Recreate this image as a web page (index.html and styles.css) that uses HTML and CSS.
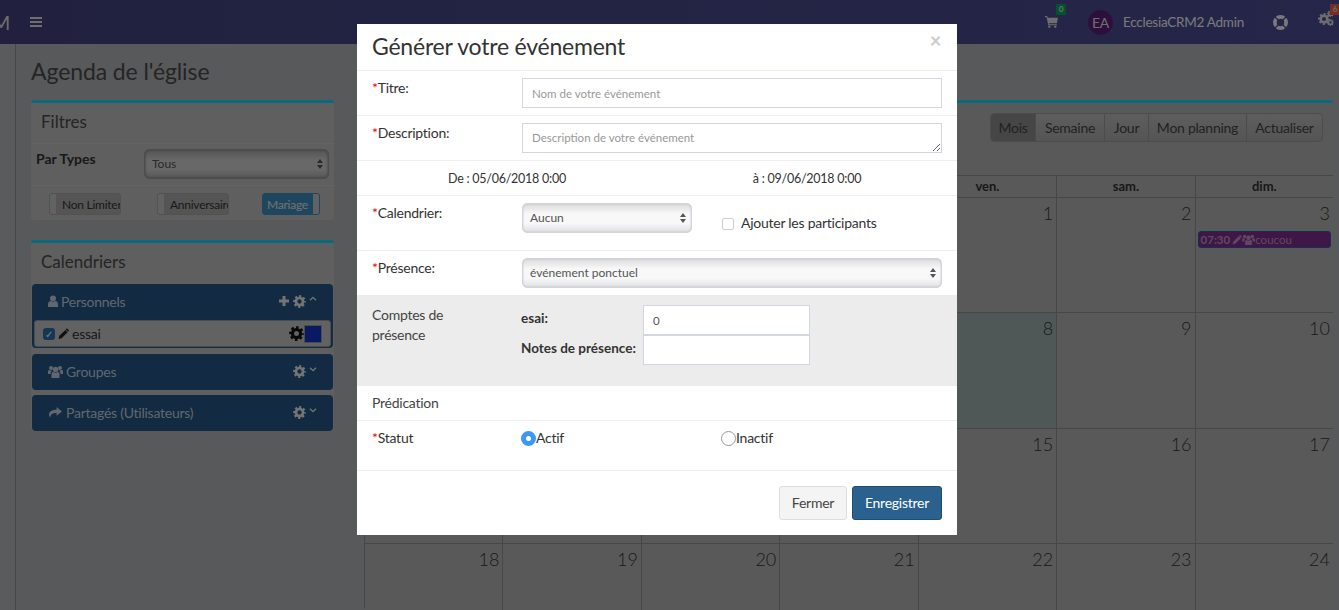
FILE: index.html
```html
<!DOCTYPE html>
<html>
<head>
    <title>Agenda de l'église</title>
    <link rel="stylesheet" href="styles.css">
</head>
<body>
    <svg class="defs" width="0" height="0">
        <symbol id="i-cog" viewBox="0 0 24 24">
            <circle cx="12" cy="12" r="6.5" fill="none" stroke="currentColor" stroke-width="5"/>
            <circle cx="12" cy="12" r="9.8" fill="none" stroke="currentColor" stroke-width="4" stroke-dasharray="4.1 3.6" stroke-dashoffset="2"/>
        </symbol>
        <symbol id="i-plus" viewBox="0 0 24 24">
            <path d="M9 2h6v7h7v6h-7v7H9v-7H2V9h7z" fill="currentColor"/>
        </symbol>
        <symbol id="i-up" viewBox="0 0 24 24">
            <path d="M3 16l9-9 9 9" fill="none" stroke="currentColor" stroke-width="4"/>
        </symbol>
        <symbol id="i-down" viewBox="0 0 24 24">
            <path d="M3 8l9 9 9-9" fill="none" stroke="currentColor" stroke-width="4"/>
        </symbol>
        <symbol id="i-user" viewBox="2 0 20 24">
            <circle cx="12" cy="7" r="6" fill="currentColor"/>
            <path d="M2 24v-5c0-5 3-7 5-7 1.500 1 3 1.500 5 1.500s3.500-.5 5-1.500c2 0 5 2 5 7v5z" fill="currentColor"/>
        </symbol>
        <symbol id="i-users" viewBox="0 0 30 26">
            <circle cx="15" cy="9" r="5.500" fill="currentColor"/>
            <circle cx="6" cy="6" r="4" fill="currentColor"/>
            <circle cx="24" cy="6" r="4" fill="currentColor"/>
            <path d="M7 26v-8c0-3 2-4 4-4 1 1 2.500 1.500 4 1.500s3-.5 4-1.500c2 0 4 1 4 4v8z" fill="currentColor"/>
            <path d="M0 18v-5c0-2 1-3 3-3 1 1 2 1 3 1l2 .5c-2 1-3 3-3 6.500H0zM30 18v-5c0-2-1-3-3-3-1 1-2 1-3 1l-2 .5c2 1 3 3 3 6.500h5z" fill="currentColor"/>
        </symbol>
        <symbol id="i-share" viewBox="0 0 24 24">
            <path d="M14 2l10 8-10 8v-5c-6 0-10 1-12 8-1-1-2-3-2-5 0-6 6-9 14-9z" fill="currentColor"/>
        </symbol>
        <symbol id="i-pencil" viewBox="0 0 24 24">
            <path d="M1 23l2-7L16 3l5 5L8 21zM18 1c1-1 2-1 3 0l2 2c1 1 1 2 0 3l-1 1-5-5z" fill="currentColor"/>
        </symbol>
        <symbol id="i-cart" viewBox="0 0 24 24">
            <path d="M0 2h4l1 3h19l-2 10H7l.5 2H22v2H6L3 4H0z" fill="currentColor"/>
            <circle cx="8" cy="21.500" r="2.200" fill="currentColor"/>
            <circle cx="19" cy="21.500" r="2.200" fill="currentColor"/>
        </symbol>
        <symbol id="i-ring" viewBox="0 0 24 24">
            <circle cx="12" cy="12" r="9" fill="none" stroke="currentColor" stroke-width="6"/>
            <path d="M2.500 2.500l6 6M21.500 2.500l-6 6M2.500 21.500l6-6M21.500 21.500l-6-6" stroke="#4c4c94" stroke-width="2"/>
        </symbol>
    </svg>

    <header class="navbar">
        <span class="logo">M</span>
        <span class="bars"><i></i><i></i><i></i></span>
        <div class="nav-right">
            <span class="nav-cart">
                <svg class="ico-cart"><use href="#i-cart"/></svg>
                <b class="badge green">0</b>
            </span>
            <span class="avatar">EA</span>
            <span class="nav-user">EcclesiaCRM2 Admin</span>
            <svg class="ico-ring"><use href="#i-ring"/></svg>
            <span class="nav-cogs">
                <svg class="cog-big"><use href="#i-cog"/></svg>
                <svg class="cog-small"><use href="#i-cog"/></svg>
                <svg class="cog-small top"><use href="#i-cog"/></svg>
                <b class="badge red">6</b>
            </span>
        </div>
    </header>

    <div class="page">
        <aside class="sidebar"></aside>
        <main class="content">
            <h1>Agenda de l'église</h1>
            <div class="columns">
                <div class="left-col">
                    <section class="box">
                        <h3 class="box-title">Filtres</h3>
                        <div class="filter-type">
                            <b>Par Types</b>
                            <div class="select-wrap filter-select"><select><option>Tous</option></select></div>
                        </div>
                        <div class="toggles">
                            <span class="toggle"><i></i><em>Non Limiter</em></span>
                            <span class="toggle"><i></i><em>Anniversaire</em></span>
                            <span class="toggle on"><em>Mariage</em><i></i></span>
                        </div>
                    </section>
                    <section class="box cal-box">
                        <h3 class="box-title">Calendriers</h3>
                        <div class="panel first">
                            <div class="panel-head">
                                <svg class="ico-user"><use href="#i-user"/></svg>
                                <span>Personnels</span>
                                <div class="panel-tools">
                                    <svg class="ico-plus"><use href="#i-plus"/></svg>
                                    <svg class="ico-cog"><use href="#i-cog"/></svg>
                                    <svg class="ico-caret up"><use href="#i-up"/></svg>
                                </div>
                            </div>
                            <div class="panel-item">
                                <span class="check-on">&#10003;</span>
                                <svg class="ico-pencil"><use href="#i-pencil"/></svg>
                                <span class="item-name">essai</span>
                                <svg class="ico-cog dark"><use href="#i-cog"/></svg>
                                <span class="swatch"></span>
                            </div>
                        </div>
                        <div class="panel">
                            <div class="panel-head">
                                <svg class="ico-users"><use href="#i-users"/></svg>
                                <span>Groupes</span>
                                <div class="panel-tools">
                                    <svg class="ico-cog"><use href="#i-cog"/></svg>
                                    <svg class="ico-caret"><use href="#i-down"/></svg>
                                </div>
                            </div>
                        </div>
                        <div class="panel">
                            <div class="panel-head">
                                <svg class="ico-users"><use href="#i-share"/></svg>
                                <span>Partagés (Utilisateurs)</span>
                                <div class="panel-tools">
                                    <svg class="ico-cog"><use href="#i-cog"/></svg>
                                    <svg class="ico-caret"><use href="#i-down"/></svg>
                                </div>
                            </div>
                        </div>
                    </section>
                </div>

                <section class="box calendar">
                    <div class="cal-toolbar">
                        <div class="btn-group">
                            <span class="active w-mois">Mois</span>
                            <span class="w-semaine">Semaine</span>
                            <span class="w-jour">Jour</span>
                            <span class="w-planning">Mon planning</span>
                            <span class="w-actu">Actualiser</span>
                        </div>
                    </div>
                    <div class="cal-grid">
                        <div class="dow">lun.</div><div class="dow">mar.</div><div class="dow">mer.</div><div class="dow">jeu.</div><div class="dow">ven.</div><div class="dow">sam.</div><div class="dow">dim.</div>
                        <div class="day other">28</div><div class="day other">29</div><div class="day other">30</div><div class="day other">31</div><div class="day">1</div><div class="day">2</div>
                        <div class="day">3<span class="event"><b>07:30</b><svg class="ico-ev-pencil"><use href="#i-pencil"/></svg><svg class="ico-ev-users"><use href="#i-users"/></svg>coucou</span></div>
                        <div class="day">4</div><div class="day">5</div><div class="day">6</div><div class="day">7</div><div class="day today">8</div><div class="day">9</div><div class="day">10</div>
                        <div class="day">11</div><div class="day">12</div><div class="day">13</div><div class="day">14</div><div class="day">15</div><div class="day">16</div><div class="day">17</div>
                        <div class="day">18</div><div class="day">19</div><div class="day">20</div><div class="day">21</div><div class="day">22</div><div class="day">23</div><div class="day">24</div>
                    </div>
                </section>
            </div>
        </main>
    </div>

    <div class="backdrop"></div>

    <div class="modal">
        <div class="modal-head">
            <h2>Générer votre événement</h2>
            <span class="close">&times;</span>
        </div>
        <div class="row row-title">
            <label><i>*</i>Titre:</label>
            <input type="text" placeholder="Nom de votre événement">
        </div>
        <div class="row row-desc">
            <label><i>*</i>Description:</label>
            <textarea placeholder="Description de votre événement"></textarea>
        </div>
        <div class="row-dates">
            <span>De : 05/06/2018 0:00</span>
            <span>à : 09/06/2018 0:00</span>
        </div>
        <div class="row row-cal">
            <label><i>*</i>Calendrier:</label>
            <div class="select-wrap cal-select"><select><option>Aucun</option></select></div>
            <span class="check-off"></span>
            <span class="attend">Ajouter les participants</span>
        </div>
        <div class="row row-pres">
            <label><i>*</i>Présence:</label>
            <div class="select-wrap pres-select"><select><option>événement ponctuel</option></select></div>
        </div>
        <div class="row-counts">
            <span class="counts-label">Comptes de présence</span>
            <div class="counts">
                <b>esai:</b><input type="text" value="0">
                <b>Notes de présence:</b><input type="text">
            </div>
        </div>
        <div class="row-pred">Prédication</div>
        <div class="row row-status">
            <label><i>*</i>Statut</label>
            <span class="radio-col"><span class="radio on"></span>Actif</span>
            <span class="radio-col"><span class="radio"></span>Inactif</span>
        </div>
        <div class="modal-foot">
            <button class="btn-close">Fermer</button>
            <button class="btn-save">Enregistrer</button>
        </div>
    </div>
</body>
</html>
```

FILE: styles.css
```css
* {
    box-sizing: border-box;
}
html, body {
    margin: 0;
    height: 610px;
    overflow: hidden;
}
body {
    font-family: "Lato", "Noto Sans", sans-serif;
    font-size: 14px;
    letter-spacing: -0.25px;
    color: #444;
    background: #b0b3b6;
}
.defs {
    display: block;
    height: 0;
}

/* top bar */
.navbar {
    height: 44px;
    background: linear-gradient(to right, #42427e, #4c4c94);
    display: flex;
    align-items: center;
    color: #fff;
}
.logo {
    width: 10px;
    overflow: hidden;
    direction: rtl;
    font-size: 20px;
    color: #ddd;
}
.bars {
    display: flex;
    flex-direction: column;
    gap: 2px;
    width: 12px;
    margin-left: 20px;
}
.bars i {
    height: 2px;
    background: #ddd;
}
.nav-right {
    margin-left: auto;
    display: flex;
    align-items: center;
}
.nav-cart, .nav-cogs {
    position: relative;
    display: block;
    height: 14px;
}
.nav-cart {
    width: 13px;
}
.ico-cart {
    display: block;
    width: 13px;
    height: 13px;
    color: #ddd;
}
.badge {
    position: absolute;
    top: -11px;
    left: 11px;
    width: 10px;
    height: 11px;
    font-size: 8px;
    line-height: 11px;
    text-align: center;
    color: #ddd;
}
.badge.green {
    background: #00a65a;
}
.badge.red {
    background: #f05a3c;
    top: -10px;
    left: 12px;
}
.avatar {
    width: 25px;
    height: 25px;
    margin-left: 30px;
    border-radius: 50%;
    background: #5a1f7c;
    color: #ddd;
    font-size: 14px;
    line-height: 25px;
    text-align: center;
}
.nav-user {
    margin-left: 10px;
    font-size: 13.500px;
    color: #f2f2f6;
}
.ico-ring {
    width: 15px;
    height: 15px;
    margin-left: 29px;
    color: #f2f2f6;
}
.nav-cogs {
    width: 21px;
    margin: 0 0 0 30px;
    height: 16px;
    color: #ddd;
}
.cog-big {
    position: absolute;
    left: 0;
    top: -1px;
    width: 12px;
    height: 12px;
}
.cog-small {
    position: absolute;
    left: 9px;
    top: 5px;
    width: 7px;
    height: 7px;
}
.cog-small.top {
    top: -4px;
}

/* page */
.page {
    display: flex;
    height: 566px;
}
.sidebar {
    width: 16px;
    flex: none;
    background: #b4b6b8;
    border-right: 1px solid #8c8f92;
}
.content {
    flex: 1;
    padding: 13px 6px 0 15px;
    min-width: 0;
}
h1 {
    margin: 0 0 15px;
    font-size: 23px;
    line-height: 28px;
    font-weight: 400;
    letter-spacing: -0.1px;
    color: #4a4a4a;
}
.columns {
    display: grid;
    grid-template-columns: 303px 969px;
    gap: 30px;
}
.box {
    background: #bebebe;
    border-top: 3px solid #14d4fa;
    border-radius: 3px;
    margin-bottom: 20px;
}
.box-title {
    margin: 0;
    padding: 0 10px 2px;
    font-size: 17px;
    font-weight: 400;
    line-height: 38px;
    letter-spacing: 0;
    color: #4a4a4a;
}
.filter-type {
    display: flex;
    padding: 5px 5px 6px;
    height: 43px;
    border-top: 1px solid #c8c8c8;
    border-bottom: 1px solid #c8c8c8;
}
.filter-type b {
    width: 108px;
    line-height: 20px;
    letter-spacing: 0;
    color: #333;
}
.select-wrap {
    position: relative;
    height: 30px;
    border: 1px solid #d0d4de;
    border-radius: 5px;
    background: linear-gradient(to bottom, #dcdcdc, #f8f8f8 35%, #f8f8f8 70%, #e0e0e0);
    box-shadow: inset 0 0 2px #bbb;
}
.select-wrap::before, .select-wrap::after {
    content: "";
    position: absolute;
    right: 5px;
    border-left: 3px solid transparent;
    border-right: 3px solid transparent;
}
.select-wrap::before {
    top: 9px;
    border-bottom: 4px solid #555;
}
.select-wrap::after {
    top: 15px;
    border-top: 4px solid #555;
}
.select-wrap select {
    width: 100%;
    height: 100%;
    border: 0;
    padding: 0 7px 2px;
    background: transparent;
    appearance: none;
    font-family: inherit;
    font-size: 12px;
    color: #555;
}
.filter-select {
    width: 185px;
    border-color: #999;
    background: linear-gradient(to bottom, #aaa, #d0d0d0 35%, #d0d0d0 70%, #b0b0b0);
    box-shadow: inset 0 0 3px #777;
}
.toggles {
    height: 34px;
    display: flex;
    padding: 7px 0 0 18px;
}
.toggle {
    display: flex;
    width: 72px;
    height: 22px;
    overflow: hidden;
    border: 1px solid #a4a4a4;
    border-radius: 3px;
    background: #ababab;
    font-size: 12px;
    line-height: 21px;
    color: #333;
    white-space: nowrap;
    margin-right: 36px;
}
.toggle i {
    flex: none;
    width: 6px;
    background: #c4c4c4;
}
.toggle em {
    font-style: normal;
    padding-left: 6px;
}
.toggle.on {
    width: 58px;
    margin: 0 0 0 -3px;
    border-color: #3c8dbc;
    background: #3c8dbc;
    color: #e4e4e4;
}
.toggle.on em {
    flex: 1;
    padding-left: 4px;
}
.cal-box {
    margin-bottom: 0;
}
.cal-box .box-title {
    padding-bottom: 3px;
}
.panel {
    margin: 0 1px 5px;
    background: #245484;
    border-radius: 4px;
    color: #f4f4f4;
}
.panel.first {
    margin-bottom: 6px;
    padding-bottom: 1px;
}
.panel:last-child {
    margin-bottom: 0;
}
.panel-head {
    display: flex;
    align-items: center;
    height: 36px;
    padding: 0 16px 2px;
    color: #c0cfdf;
}
.panel-tools {
    margin-left: auto;
    display: flex;
    align-items: center;
    gap: 3px;
    color: #e8e8e8;
}
.ico-user {
    width: 10px;
    height: 12px;
    margin-right: 3px;
}
.ico-users {
    width: 15px;
    height: 13px;
    margin-right: 3px;
}
.ico-plus {
    width: 12px;
    height: 12px;
}
.ico-cog {
    width: 13px;
    height: 13px;
}
.ico-caret {
    width: 8px;
    height: 8px;
    margin-top: -5px;
}
.panel-item {
    display: flex;
    align-items: center;
    height: 27px;
    margin: 0 2px;
    border: 1px solid #999;
    border-radius: 3px;
    background: #c4c4c4;
    padding: 0 8px;
    color: #333;
}
.check-on {
    width: 12px;
    height: 12px;
    border-radius: 3px;
    background: #2b6ea8;
    color: #fff;
    font-size: 10px;
    line-height: 12px;
    text-align: center;
}
.ico-pencil {
    width: 11px;
    height: 12px;
    margin-left: 3px;
    color: #222;
}
.item-name {
    margin-left: 3px;
    flex: 1;
}
.ico-cog.dark {
    width: 15px;
    height: 15px;
    color: #111;
}
.swatch {
    width: 18px;
    height: 18px;
    border: 1px solid #999;
    background: #1432c8;
}

/* calendar */
.calendar {
    background: #b2b2b2;
    margin: 0;
    height: 510px;
    overflow: hidden;
    border-radius: 3px;
}
.cal-toolbar {
    height: 72px;
    padding: 10px 10px 0 0;
    display: flex;
    justify-content: flex-end;
}
.btn-group {
    display: flex;
    height: 29px;
    border: 1px solid #999;
    border-radius: 4px;
    background: linear-gradient(to bottom, #bcbcbc, #aaa);
    font-size: 14px;
    line-height: 27px;
    color: #444;
    overflow: hidden;
}
.btn-group span {
    text-align: center;
    border-left: 1px solid #999;
}
.btn-group .active {
    border-left: 0;
    background: #8c8c8c;
}
.w-mois { width: 44px; }
.w-semaine { width: 69px; }
.w-jour { width: 44px; }
.w-planning { width: 98px; }
.w-actu { width: 76px; }
.cal-grid {
    display: grid;
    grid-template-columns: repeat(7, 1fr);
    grid-template-rows: 22px repeat(3, 115.300px) 115px;
    border-top: 1px solid #8e8e8e;
}
.dow {
    text-align: center;
    font-weight: 700;
    font-size: 13px;
    line-height: 21px;
    letter-spacing: 0;
    color: #333;
    border-left: 1px solid #8e8e8e;
    border-bottom: 1px solid #8e8e8e;
}
.day {
    position: relative;
    text-align: right;
    padding: 2px 3px 0 0;
    font-size: 18px;
    font-weight: 300;
    line-height: 26px;
    letter-spacing: 0;
    color: #333;
    border-left: 1px solid #8e8e8e;
    border-bottom: 1px solid #8e8e8e;
}
.today {
    background: #a0b0ae;
}
.event {
    position: absolute;
    left: 2px;
    right: 2px;
    top: 33px;
    display: flex;
    align-items: center;
    height: 17px;
    padding-left: 2px;
    border: 1px solid #2e5fa0;
    border-radius: 3px;
    background: #7c2f8c;
    font-size: 11.500px;
    line-height: 15px;
    color: #c090c8;
    text-align: left;
    font-weight: 400;
}
.ico-ev-pencil {
    width: 10px;
    height: 10px;
    margin-left: 2px;
}
.ico-ev-users {
    width: 13px;
    height: 11px;
}
.backdrop {
    position: fixed;
    inset: 0;
    background: rgba(0, 0, 0, 0.5);
}

/* modal */
.modal {
    position: fixed;
    left: 357px;
    top: 24px;
    width: 600px;
    height: 511px;
    background: #fff;
    color: #333;
}
.modal-head {
    position: relative;
    height: 47px;
    padding: 9px 15px 0;
    border-bottom: 1px solid #eee;
}
.modal-head h2 {
    margin: 0;
    font-size: 23px;
    line-height: 27px;
    font-weight: 400;
    letter-spacing: -0.22px;
    color: #333;
}
.close {
    position: absolute;
    right: 16px;
    top: 4px;
    font-size: 20px;
    font-weight: 700;
    color: #ccc;
}
.row {
    display: flex;
    align-items: flex-start;
    padding: 7px 15px 0;
    border-bottom: 1px solid #eee;
}
.row label {
    width: 150px;
    flex: none;
    line-height: 20px;
}
.row label i {
    color: #e00;
    font-style: normal;
}
.row-title { height: 45px; }
.row-desc { height: 45px; }
input, textarea {
    display: block;
    width: 420px;
    height: 30px;
    padding: 5px 9px;
    border: 1px solid #d2d6de;
    font-family: inherit;
    font-size: 11.500px;
    color: #555;
    background: #fff;
    border-radius: 0;
    outline: none;
    line-height: 18px;
}
input::placeholder, textarea::placeholder {
    color: #999;
}
.row-dates {
    height: 35px;
    display: grid;
    grid-template-columns: 1fr 1fr;
    text-align: center;
    line-height: 35px;
    font-size: 12.500px;
    border-bottom: 1px solid #eee;
}
.row-cal { height: 55px; }
.cal-select { width: 170px; }
.check-off {
    width: 12px;
    height: 12px;
    margin: 15px 0 0 30px;
    border: 1px solid #ccc;
    border-radius: 2px;
}
.attend {
    margin: 10px 0 0 7px;
    line-height: 20px;
}
.row-pres {
    height: 44px;
    border-bottom: 0;
}
.pres-select { width: 420px; }
.row-counts {
    height: 91px;
    display: flex;
    padding: 10px 15px 0;
    background: #ececec;
}
.counts-label {
    width: 150px;
    flex: none;
    padding-right: 50px;
    line-height: 20px;
    color: #444;
}
.counts {
    display: grid;
    grid-template-columns: 122px 167px;
    grid-auto-rows: 30px;
    margin-left: -1px;
}
.counts b {
    line-height: 26px;
    font-size: 13.500px;
    letter-spacing: 0;
}
.counts input {
    width: 167px;
}
.row-pred {
    height: 35px;
    padding-left: 15px;
    line-height: 34px;
    border-bottom: 1px solid #eee;
    color: #444;
}
.row-status {
    height: 50px;
}
.row-status label {
    width: 149px;
}
.radio-col {
    display: flex;
    align-items: center;
    width: 200px;
    line-height: 20px;
}
.radio {
    width: 15px;
    height: 15px;
    border: 1px solid #999;
    border-radius: 50%;
}
.radio.on {
    border: 5px solid #3d97f5;
    background: #fff;
}
.modal-foot {
    display: flex;
    justify-content: flex-end;
    gap: 5px;
    padding: 15px 15px 0;
}
.modal-foot button {
    height: 34px;
    padding-bottom: 3px;
    border-radius: 3px;
    font-family: inherit;
    font-size: 14px;
    letter-spacing: -0.25px;
}
.btn-close {
    width: 68px;
    border: 1px solid #ddd;
    background: #f4f4f4;
    color: #444;
}
.btn-save {
    width: 90px;
    border: 1px solid #204d74;
    background: #2b618f;
    color: #fff;
}
```
